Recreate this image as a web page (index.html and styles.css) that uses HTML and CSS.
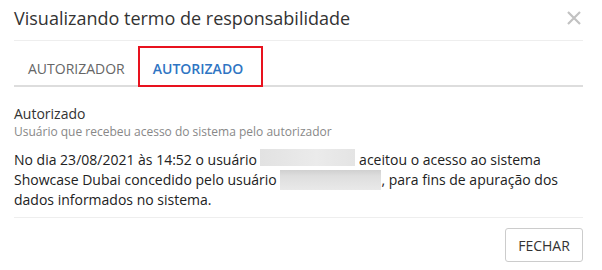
FILE: index.html
```html
<!DOCTYPE html>
<html lang="pt-BR">
<head>
<meta charset="utf-8">
<title>Visualizando termo de responsabilidade</title>
<link rel="stylesheet" href="styles.css">
</head>
<body>
<div class="modal">
  <div class="modal-header">
    <h1 class="modal-title">Visualizando termo de responsabilidade</h1>
    <button class="close" aria-label="Fechar">
      <svg width="14" height="14" viewBox="0 0 14 14"><path d="M1 1L13 13M13 1L1 13" stroke="#c2c2c2" stroke-width="2.2" fill="none"/></svg>
    </button>
  </div>
  <div class="tabs">
    <div class="tab">AUTORIZADOR</div>
    <div class="tab active">AUTORIZADO<span class="highlight"></span></div>
  </div>
  <div class="content">
    <div class="label">Autorizado</div>
    <div class="hint">Usuário que recebeu acesso do sistema pelo autorizador</div>
    <p class="text">No dia 23/08/2021 às 14:52 o usuário <span class="redacted r1"></span> aceitou o acesso ao sistema Showcase Dubai concedido pelo usuário <span class="redacted r2"></span>, para fins de apuração dos dados informados no sistema.</p>
  </div>
  <div class="modal-footer">
    <button class="btn">FECHAR</button>
  </div>
</div>
</body>
</html>
```
FILE: styles.css
```css
* { box-sizing: border-box; }
html, body { margin: 0; padding: 0; background: #fff; }
body {
  font-family: "Open Sans", "Liberation Sans", sans-serif;
  color: #333;
  width: 602px;
  height: 270px;
  overflow: hidden;
}
.modal { padding: 0 19px 0 14px; }
.modal-header {
  display: flex;
  justify-content: space-between;
  align-items: flex-start;
  padding-top: 6px;
  height: 41px;
  border-bottom: 1px solid #eeeeee;
}
.modal-title {
  margin: 0;
  font-size: 18px;
  line-height: 24px;
  font-weight: 400;
  color: #333;
}
.close {
  border: 0;
  background: none;
  padding: 0;
  margin: 5px 2px 0 0;
  width: 14px;
  height: 14px;
  display: flex;
  cursor: pointer;
}
.tabs {
  display: flex;
  margin-top: 5px;
  border-bottom: 2px solid #dddddd;
}
.tab {
  position: relative;
  padding: 13px 14px 6px;
  font-size: 14px;
  line-height: 20px;
  color: #666;
}
.tab.active {
  color: #2f75c3;
  font-weight: 600;
}
.highlight {
  position: absolute;
  left: -1px;
  right: -6px;
  top: 0;
  bottom: -2px;
  border: 2px solid #e8121e;
}
.content { padding: 17px 0 7px; }
.label { font-size: 14px; line-height: 20px; color: #333; }
.hint { font-size: 12px; line-height: 15px; color: #888; }
.text {
  margin: 11px 0 0;
  font-size: 14px;
  line-height: 20px;
  color: #222;
}
.redacted {
  display: inline-block;
  vertical-align: top;
  background: linear-gradient(90deg, #e2e2e2 0%, #ebebeb 60%, #e4e4e4 100%);
}
.r1 { width: 95px; height: 17px; margin-top: -1px; }
.r2 {
  width: 101px;
  height: 20px;
  background: linear-gradient(180deg, #d0d0d0 0%, #dedede 30%, #e9e9e9 100%);
}
.modal-footer {
  border-top: 1px solid #eeeeee;
  padding-top: 10px;
  display: flex;
  justify-content: flex-end;
}
.btn {
  font-family: "Open Sans", "Liberation Sans", sans-serif;
  font-size: 14px;
  color: #333;
  background: #fff;
  border: 1px solid #cccccc;
  border-radius: 3px;
  width: 78px;
  height: 34px;
  padding: 0;
  margin-right: 0;
}
```
